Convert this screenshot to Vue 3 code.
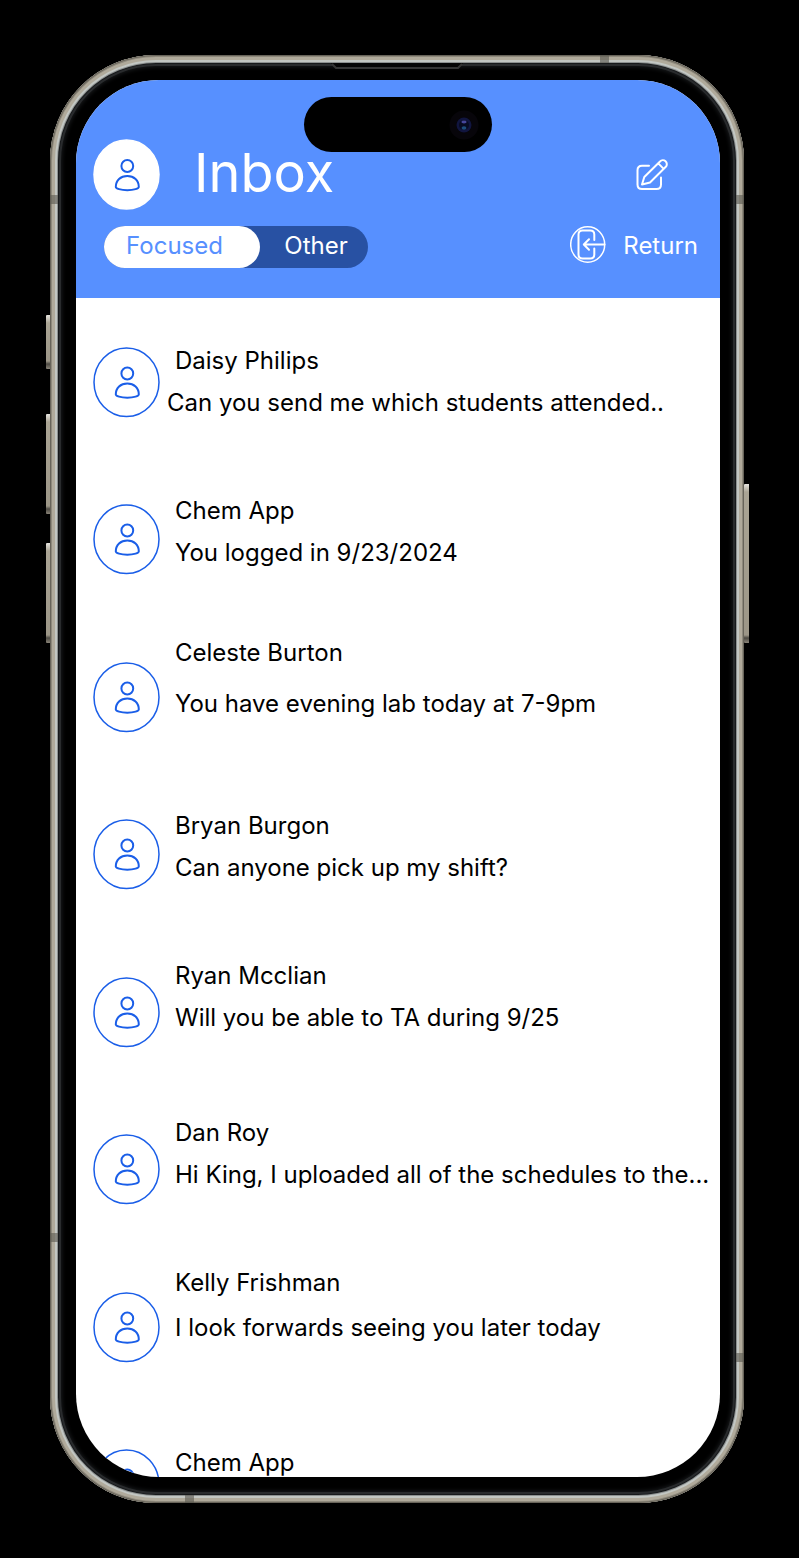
<script setup>
import { ref } from 'vue'

const tab = ref('focused')

const messages = [
  { name: 'Daisy Philips', text: 'Can you send me which students attended..', tone: 'low wide' },
  { name: 'Chem App', text: 'You logged in 9/23/2024', tone: 'middle' },
  { name: 'Celeste Burton', text: 'You have evening lab today at 7-9pm', tone: 'top airy' },
  { name: 'Bryan Burgon', text: 'Can anyone pick up my shift?', tone: 'middle' },
  { name: 'Ryan Mcclian', text: 'Will you be able to TA during 9/25', tone: 'high' },
  { name: 'Dan Roy', text: 'Hi King, I uploaded all of the schedules to the...', tone: 'high' },
  { name: 'Kelly Frishman', text: 'I look forwards seeing you later today', tone: 'top relaxed' },
  { name: 'Chem App', text: '', tone: 'low' }
]
</script>

<template>
  <div class="stage">
    <div class="phone">
      <span class="key key-action"></span>
      <span class="key key-up"></span>
      <span class="key key-down"></span>
      <span class="key key-power"></span>
      <span class="band band-side band-left-top"></span>
      <span class="band band-side band-right-top"></span>
      <span class="band band-side band-left-bottom"></span>
      <span class="band band-side band-right-bottom"></span>
      <span class="band band-edge band-top"></span>
      <span class="band band-edge band-bottom"></span>
      <svg class="speaker" width="132" height="8" viewBox="0 0 132 8" aria-hidden="true">
        <path d="M0 0H132L127 6H5Z" fill="#050505" />
        <path d="M1 1L5 5H127L131 1" fill="none" stroke="#353535" stroke-width="2" />
      </svg>

      <main class="screen">
        <div class="island">
          <svg width="30" height="30" viewBox="0 0 30 30" aria-hidden="true">
            <circle cx="15" cy="15" r="14.5" fill="#07050a" />
            <circle cx="15" cy="15" r="7.5" fill="#11153f" />
            <circle cx="15" cy="15" r="5" fill="#080b22" />
            <ellipse cx="15" cy="12" rx="2.6" ry="1.4" fill="#46469a" />
            <ellipse cx="15" cy="18" rx="2.4" ry="1.8" fill="#1d4d7c" />
          </svg>
        </div>

        <header class="header">
          <div class="title-row">
            <svg class="avatar avatar-solid" width="67" height="71" viewBox="0 0 67 71" aria-hidden="true">
              <ellipse class="ring" cx="33.5" cy="35.5" rx="32.5" ry="34.6" />
              <circle cx="34.3" cy="27" r="5.9" />
              <path d="M22.800 48C22.800 41.400 27.600 37 34.300 37S45.800 41.400 45.800 48C45.800 49.300 41.100 51.200 34.300 51.200S22.800 49.300 22.800 48Z" />
            </svg>
            <h1 class="title">Inbox</h1>
            <button class="compose" type="button" aria-label="Compose">
              <svg width="32" height="32" viewBox="0 0 32 32" aria-hidden="true">
                <path d="M13 6.800H6Q1.500 6.800 1.500 11.300V25.500Q1.500 30 6 30H20.500Q25 30 25 25.500V18.500" />
                <path d="M6 25.500L8.300 18L24 2.500A3.900 3.900 0 0 1 29.800 7.800L14 23.500ZM22.300 4.400L27.700 9.900" />
              </svg>
            </button>
          </div>
          <div class="tool-row">
            <div class="tabs">
              <button type="button" class="tab tab-focused" :aria-pressed="tab === 'focused'" @click="tab = 'focused'">Focused</button>
              <button type="button" class="tab tab-other" :aria-pressed="tab === 'other'" @click="tab = 'other'">Other</button>
            </div>
            <a class="return" href="#">
              <svg width="36" height="38" viewBox="0 0 36 38" aria-hidden="true">
                <ellipse class="ring" cx="17.700" cy="18.500" rx="17" ry="17.700" />
                <path d="M24.300 14V8.500Q24.300 4.500 20.300 4.500H12.500Q8.500 4.500 8.500 8.500V28.500Q8.500 32.500 12.500 32.500H20.300Q24.300 32.500 24.300 28.500V22.500" />
                <path d="M34.500 18.500H14M19 13.300L13.800 18.500L19 23.700" />
              </svg>
              <span>Return</span>
            </a>
          </div>
        </header>

        <ul class="list">
          <li v-for="(m, i) in messages" :key="i" class="item" :class="m.tone">
            <svg class="avatar" width="67" height="71" viewBox="0 0 67 71" aria-hidden="true">
              <ellipse class="ring" cx="33.5" cy="35.2" rx="32.5" ry="34.3" />
              <circle cx="34.3" cy="26.5" r="5.9" />
              <path d="M22.800 47.500C22.800 40.900 27.600 36.500 34.300 36.500S45.800 40.900 45.800 47.500C45.800 48.800 41.100 50.700 34.300 50.700S22.800 48.800 22.800 47.500Z" />
            </svg>
            <div class="body">
              <h2 class="name">{{ m.name }}</h2>
              <p v-if="m.text" class="preview">{{ m.text }}</p>
            </div>
          </li>
        </ul>
      </main>
    </div>
  </div>
</template>

<style>
body {
  margin: 0;
  background: #000;
}
</style>

<style scoped>
* {
  box-sizing: border-box;
}

.stage {
  display: flex;
  height: 100vh;
  padding: 55px 55px 55px 50px;
  background: #000;
  font-family: Inter, "Liberation Sans", sans-serif;
  font-size: 24px;
  color: #000;
}

.phone {
  position: relative;
  display: flex;
  flex: 1;
  min-width: 0;
  padding: 25px 24px 26px 26px;
  border-radius: 106px;
  background: #000;
  box-shadow:
    inset 0 0 0 1px #68645a,
    inset 0 0 0 2px #8e897c,
    inset 0 0 0 5px #b0aa9b,
    inset 0 0 0 7px #c2c6c2,
    inset 0 0 0 8px #8c9090,
    inset 0 0 0 9px #17191b,
    inset 0 0 0 11px #292b2d,
    inset 0 0 4px 12px #191b1d;
}

.screen {
  position: relative;
  display: flex;
  flex: 1;
  flex-direction: column;
  min-width: 0;
  overflow: hidden;
  border-radius: 83px;
  background: #fff;
}

.key {
  position: absolute;
  left: -4px;
  width: 4px;
  border-radius: 1px 0 0 1px;
  background: linear-gradient(#e6e4df 0, #aaa494 8px, #9c9687 calc(100% - 8px), #4c4942 calc(100% - 5px), #8a8478 100%);
}

.key-action {
  top: 260px;
  height: 54px;
}

.key-up {
  top: 359px;
  height: 100px;
}

.key-down {
  top: 488px;
  height: 100px;
}

.key-power {
  right: -5px;
  left: auto;
  top: 429px;
  width: 5px;
  height: 159px;
}

.band {
  position: absolute;
  background: rgba(90, 88, 80, 0.6);
}

.band-side {
  width: 8px;
  height: 9px;
}

.band-edge {
  width: 9px;
  height: 8px;
}

.band-left-top {
  top: 140px;
  left: 0;
}

.band-right-top {
  top: 140px;
  right: 0;
}

.band-left-bottom {
  bottom: 261px;
  left: 0;
}

.band-right-bottom {
  bottom: 141px;
  right: 0;
}

.band-top {
  top: 0;
  right: 135px;
}

.band-bottom {
  bottom: 0;
  left: 135px;
}

.speaker {
  position: absolute;
  top: 8px;
  left: 50%;
  transform: translateX(-50%);
}

.island {
  position: absolute;
  top: 17px;
  left: 50%;
  display: flex;
  align-items: center;
  justify-content: flex-end;
  width: 188px;
  height: 55px;
  padding-right: 13px;
  border-radius: 28px;
  background: #000;
  transform: translateX(-50%);
}

.header {
  flex: none;
  padding: 59px 22px 30px 17px;
  background: #5790ff;
  color: #fff;
}

.title-row {
  display: flex;
  align-items: center;
  gap: 34px;
  padding-right: 30px;
}

.title {
  flex: 1;
  margin: 0;
  padding-bottom: 4px;
  font-size: 54px;
  font-weight: 400;
  line-height: 66px;
}

.avatar {
  display: block;
  flex: none;
  fill: none;
  stroke: #1a5ee8;
  stroke-width: 2;
}

.ring {
  stroke-width: 1.5;
}

.avatar-solid .ring {
  fill: #fff;
  stroke: #fff;
}

.compose {
  display: flex;
  padding: 0;
  border: 0;
  background: none;
}

.compose svg,
.return svg {
  fill: none;
  stroke: #fff;
  stroke-width: 2;
  stroke-linecap: round;
  stroke-linejoin: round;
}

.tool-row {
  display: flex;
  align-items: flex-start;
  justify-content: space-between;
  padding: 16px 0 0 11px;
}

.tabs {
  display: flex;
  width: 264px;
  border-radius: 21px;
  background: #2851a3;
}

.tab {
  height: 42px;
  padding: 0 0 4px;
  border: 0;
  border-radius: 21px;
  background: none;
  color: #fff;
  font: inherit;
}

.tab-focused {
  width: 156px;
  padding-right: 15px;
  background: #fff;
  color: #5790ff;
}

.tab-other {
  flex: 1;
  padding-left: 4px;
}

.return {
  display: flex;
  align-items: center;
  gap: 17px;
  color: #fff;
  text-decoration: none;
}

.list {
  flex: 1;
  min-height: 0;
  margin: 0;
  padding: 49px 0 0 17px;
  overflow: hidden;
  list-style: none;
}

.item {
  display: flex;
  align-items: flex-start;
  gap: 15px;
  height: 157px;
}

.item:nth-child(even) {
  height: 158px;
}

.body {
  flex: 1;
  min-width: 0;
}

.low .body {
  margin-top: -7px;
}

.middle .body {
  margin-top: -14px;
}

.high .body {
  margin-top: -22px;
}

.top .body {
  margin-top: -30px;
}

.name,
.preview {
  margin: 0;
  font-size: 24px;
  font-weight: 400;
  line-height: 42px;
  white-space: nowrap;
}

.wide .preview {
  margin-left: -8px;
}

.airy .preview {
  margin-top: 9px;
}

.relaxed .preview {
  margin-top: 3px;
}
</style>
